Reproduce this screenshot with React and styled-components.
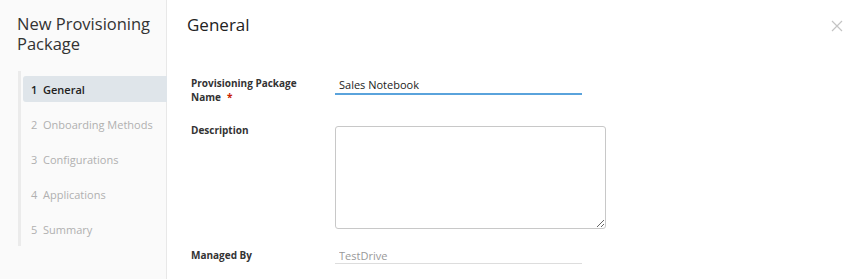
import React from "react";
import styled, { createGlobalStyle } from "styled-components";

const GlobalStyle = createGlobalStyle`
  html, body { margin: 0; padding: 0; background: #fff; }
  body { font-family: "Open Sans", "Liberation Sans", sans-serif; color: #333; }
`;

const Wizard = styled.div`
  display: flex;
  width: 855px;
  height: 279px;
  overflow: hidden;
  background: #fff;
`;

const Sidebar = styled.aside`
  width: 167px;
  flex-shrink: 0;
  background: #fafafa;
  border-right: 1px solid #e8e8e8;
  padding-top: 14px;
  box-sizing: border-box;
`;

const WizardTitle = styled.h1`
  margin: 0 0 17px 17px;
  font-size: 16.5px;
  font-weight: 400;
  line-height: 20px;
  color: #333;
`;

const Steps = styled.ol`
  list-style: none;
  margin: 0 0 0 18px;
  padding: 5px 0 4px 2px;
  border-left: 3px solid #ebebeb;
  display: flex;
  flex-direction: column;
  gap: 9px;
`;

const Step = styled.li`
  height: 26px;
  display: flex;
  align-items: center;
  padding-left: 8px;
  font-size: 11px;
  border-radius: 3px 0 0 3px;
  margin-right: -1px;
  background: ${(p) => (p.$active ? "#dfe5ea" : "transparent")};
  color: ${(p) => (p.$active ? "#222" : "#b0b0b0")};
  font-weight: ${(p) => (p.$active ? 600 : 400)};
`;

const Main = styled.main`
  flex: 1;
  position: relative;
  padding: 13px 0 0 20px;
`;

const PageTitle = styled.h2`
  margin: 0 0 39px;
  font-size: 17px;
  font-weight: 400;
  line-height: 24px;
  color: #222;
`;

const Close = styled.button`
  position: absolute;
  top: 20px;
  right: 12px;
  border: 0;
  background: none;
  padding: 0;
  width: 12px;
  height: 12px;
  display: flex;
`;

const Form = styled.div`
  display: flex;
  flex-direction: column;
  gap: 19px;
  padding-left: 4px;
`;

const Row = styled.div`
  display: flex;
  align-items: flex-start;
`;

const Label = styled.label`
  width: 144px;
  flex-shrink: 0;
  font-size: 10px;
  font-weight: 700;
  line-height: 14px;
  color: #333;
`;

const Required = styled.span`
  color: #c92100;
  margin-left: 6px;
`;

const TextInput = styled.input`
  width: 247px;
  box-sizing: border-box;
  border: 0;
  border-bottom: ${(p) => (p.$focus ? "2px solid #5aa3dc" : "1px solid #ddd")};
  background: transparent;
  padding: 0 4px;
  margin: 0;
  height: ${(p) => (p.$focus ? 19 : 16)}px;
  font-family: inherit;
  font-size: 11px;
  color: ${(p) => (p.$muted ? "#999" : "#222")};
  outline: none;
`;

const TextArea = styled.textarea`
  width: 271px;
  height: 103px;
  box-sizing: border-box;
  border: 1px solid #c8c8c8;
  border-radius: 3px;
  background: #fff;
  font-family: inherit;
  font-size: 11px;
  resize: vertical;
  margin: 3px 0 0;
`;

const steps = ["General", "Onboarding Methods", "Configurations", "Applications", "Summary"];

export default function App() {
  return (
    <>
      <GlobalStyle />
      <Wizard>
        <Sidebar>
          <WizardTitle>New Provisioning<br />Package</WizardTitle>
          <Steps>
            {steps.map((s, i) => (
              <Step key={s} $active={i === 0}>{i + 1}&nbsp;&nbsp;{s}</Step>
            ))}
          </Steps>
        </Sidebar>
        <Main>
          <PageTitle>General</PageTitle>
          <Close aria-label="Close">
            <svg width="12" height="12" viewBox="0 0 12 12">
              <path d="M1 1L11 11M11 1L1 11" stroke="#c4c4c4" strokeWidth="1.2" />
            </svg>
          </Close>
          <Form>
            <Row>
              <Label>Provisioning Package<br />Name<Required>*</Required></Label>
              <TextInput $focus defaultValue="Sales Notebook" />
            </Row>
            <Row>
              <Label>Description</Label>
              <TextArea />
            </Row>
            <Row>
              <Label>Managed By</Label>
              <TextInput $muted defaultValue="TestDrive" />
            </Row>
          </Form>
        </Main>
      </Wizard>
    </>
  );
}
